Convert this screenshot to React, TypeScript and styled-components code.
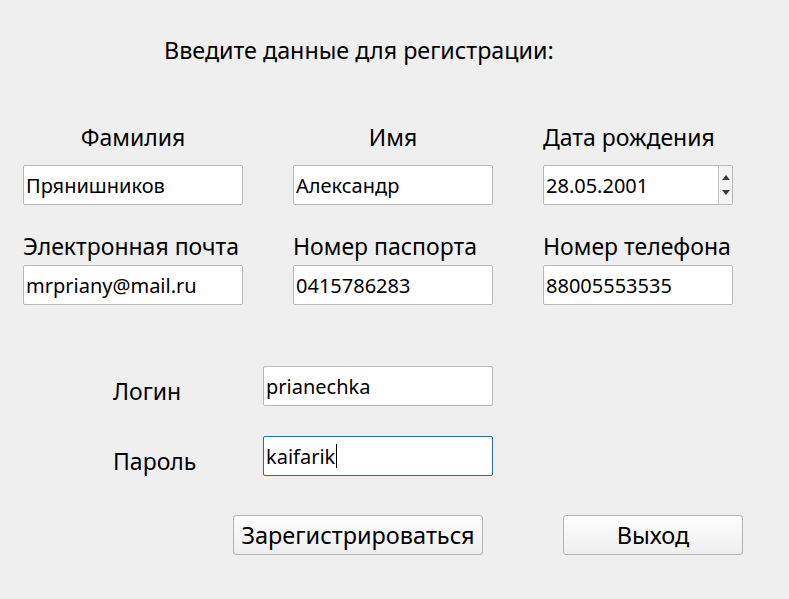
import styled, { createGlobalStyle } from "styled-components";

const GlobalStyle = createGlobalStyle`
  html, body {
    margin: 0;
    padding: 0;
    background: #efefef;
  }
  * {
    box-sizing: border-box;
  }
`;

const Window = styled.div`
  width: 789px;
  height: 599px;
  background: #efefef;
  color: #000;
  font-family: "Noto Sans", "Open Sans", sans-serif;
  font-size: 23px;
  overflow: hidden;
  display: flex;
  flex-direction: column;
`;

const Title = styled.h1`
  margin: 35px 0 0 164px;
  font-size: 23.3px;
  font-weight: 400;
  line-height: 30px;
  white-space: nowrap;
`;

const FieldsGrid = styled.div`
  margin: 40px 0 0 23px;
  display: grid;
  grid-template-columns: 220px 200px 190px;
  column-gap: 50px;
`;

const Field = styled.div`
  display: flex;
  flex-direction: column;
  height: 100px;
`;

const FieldLabel = styled.label<{ $align?: "center" | "left"; $gap: number }>`
  height: 60px;
  display: flex;
  align-items: flex-end;
  justify-content: ${(p) => (p.$align === "center" ? "center" : "flex-start")};
  padding-bottom: ${(p) => p.$gap}px;
  line-height: 30px;
  white-space: nowrap;
`;

const Input = styled.input`
  width: 100%;
  height: 40px;
  margin: 0;
  padding: 0 2px;
  font-family: inherit;
  font-size: 20px;
  color: #000;
  background: #fff;
  border: 1px solid #b9b9b9;
  border-radius: 2px;
  outline: none;
`;

const FocusedBox = styled.div`
  height: 40px;
  display: flex;
  align-items: center;
  padding: 0 2px;
  font-size: 20px;
  background: #fff;
  border: 1px solid #30699b;
  border-radius: 2px;
  white-space: nowrap;
`;

const Caret = styled.span`
  display: inline-block;
  width: 1px;
  height: 24px;
  margin-left: 1px;
  background: #000;
`;

const SpinBox = styled.div`
  display: flex;
  height: 40px;
  background: #fff;
  border: 1px solid #b9b9b9;
  border-radius: 2px;
`;

const SpinText = styled.input`
  flex: 1;
  min-width: 0;
  border: none;
  outline: none;
  padding: 0 2px;
  font-family: inherit;
  font-size: 20px;
  color: #000;
  background: transparent;
`;

const SpinButtons = styled.div`
  width: 14px;
  border-left: 1px solid #c4c4c4;
  background: #f4f4f4;
  display: flex;
  flex-direction: column;
  align-items: center;
  justify-content: space-evenly;
`;

const LoginBlock = styled.div`
  margin: 61px 0 0 113px;
  display: grid;
  grid-template-columns: 150px 230px;
  row-gap: 30px;
`;

const LoginLabel = styled.label`
  display: flex;
  align-items: center;
  padding-top: 10px;
  line-height: 30px;
`;

const ButtonRow = styled.div`
  margin: 39px 0 0 233px;
  display: flex;
  gap: 80px;
`;

const Button = styled.button<{ $width: number }>`
  width: ${(p) => p.$width}px;
  height: 40px;
  margin: 0;
  padding: 0;
  font-family: inherit;
  font-size: 23.5px;
  color: #000;
  background: linear-gradient(#fdfdfd, #efefef);
  border: 1px solid #b4b4b4;
  border-radius: 3px;
`;

const Arrow = ({ up }: { up?: boolean }) => (
  <svg width="8" height="5" viewBox="0 0 8 5">
    <path d={up ? "M0 5 L4 0 L8 5 Z" : "M0 0 L4 5 L8 0 Z"} fill="#3c3c3c" />
  </svg>
);

type FieldDef = {
  label: string;
  value: string;
  align?: "center" | "left";
  spin?: boolean;
  gap: number;
};

const fields: FieldDef[] = [
  { label: "Фамилия", value: "Прянишников", align: "center", gap: 13 },
  { label: "Имя", value: "Александр", align: "center", gap: 13 },
  { label: "Дата рождения", value: "28.05.2001", spin: true, gap: 13 },
  { label: "Электронная почта", value: "mrpriany@mail.ru", gap: 4 },
  { label: "Номер паспорта", value: "0415786283", gap: 4 },
  { label: "Номер телефона", value: "88005553535", gap: 4 },
];

export default function App() {
  return (
    <>
      <GlobalStyle />
      <Window>
        <Title>Введите данные для регистрации:</Title>
        <FieldsGrid>
          {fields.map((f) => (
            <Field key={f.label}>
              <FieldLabel $align={f.align} $gap={f.gap}>
                {f.label}
              </FieldLabel>
              {f.spin ? (
                <SpinBox>
                  <SpinText defaultValue={f.value} />
                  <SpinButtons>
                    <Arrow up />
                    <Arrow />
                  </SpinButtons>
                </SpinBox>
              ) : (
                <Input defaultValue={f.value} />
              )}
            </Field>
          ))}
        </FieldsGrid>
        <LoginBlock>
          <LoginLabel>Логин</LoginLabel>
          <Input defaultValue="prianechka" />
          <LoginLabel>Пароль</LoginLabel>
          <FocusedBox>
            kaifarik
            <Caret />
          </FocusedBox>
        </LoginBlock>
        <ButtonRow>
          <Button $width={250}>Зарегистрироваться</Button>
          <Button $width={180}>Выход</Button>
        </ButtonRow>
      </Window>
    </>
  );
}
